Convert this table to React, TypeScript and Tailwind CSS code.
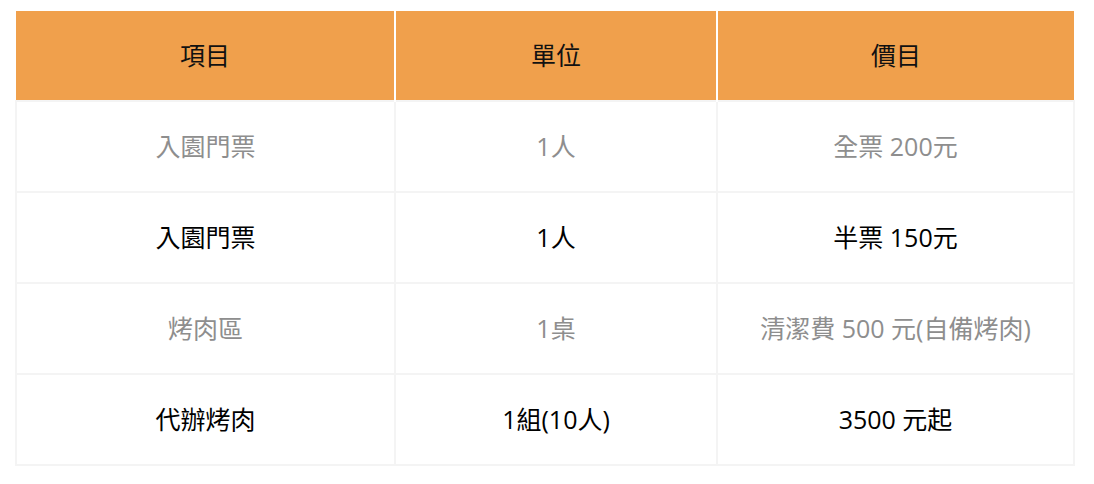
const rows = [
  { item: "入園門票", unit: "1人", price: "全票 200元", muted: true },
  { item: "入園門票", unit: "1人", price: "半票 150元", muted: false },
  { item: "烤肉區", unit: "1桌", price: "清潔費 500 元(自備烤肉)", muted: true },
  { item: "代辦烤肉", unit: "1組(10人)", price: "3500 元起", muted: false },
]

export default function App() {
  return (
    <div
      className="bg-white w-[1094px] h-[484px] pt-[11px] pl-[15px]"
      style={{ fontFamily: '"Open Sans", "Noto Sans CJK TC", sans-serif' }}
    >
      <table className="w-[1058px] table-fixed border-collapse text-[25px] text-center">
        <colgroup>
          <col className="w-[379px]" />
          <col className="w-[322px]" />
          <col className="w-[357px]" />
        </colgroup>
        <thead>
          <tr className="h-[90px] bg-[#f0a04c] text-[#111]">
            <th className="font-normal border-r-2 border-white">項目</th>
            <th className="font-normal border-r-2 border-white">單位</th>
            <th className="font-normal">價目</th>
          </tr>
        </thead>
        <tbody>
          {rows.map((r, i) => (
            <tr
              key={i}
              className={"h-[91px] " + (r.muted ? "text-[#8e8e8e]" : "text-black")}
            >
              <td className="border-2 border-[#f4f4f4]">{r.item}</td>
              <td className="border-2 border-[#f4f4f4]">{r.unit}</td>
              <td className="border-2 border-[#f4f4f4]">{r.price}</td>
            </tr>
          ))}
        </tbody>
      </table>
    </div>
  )
}
